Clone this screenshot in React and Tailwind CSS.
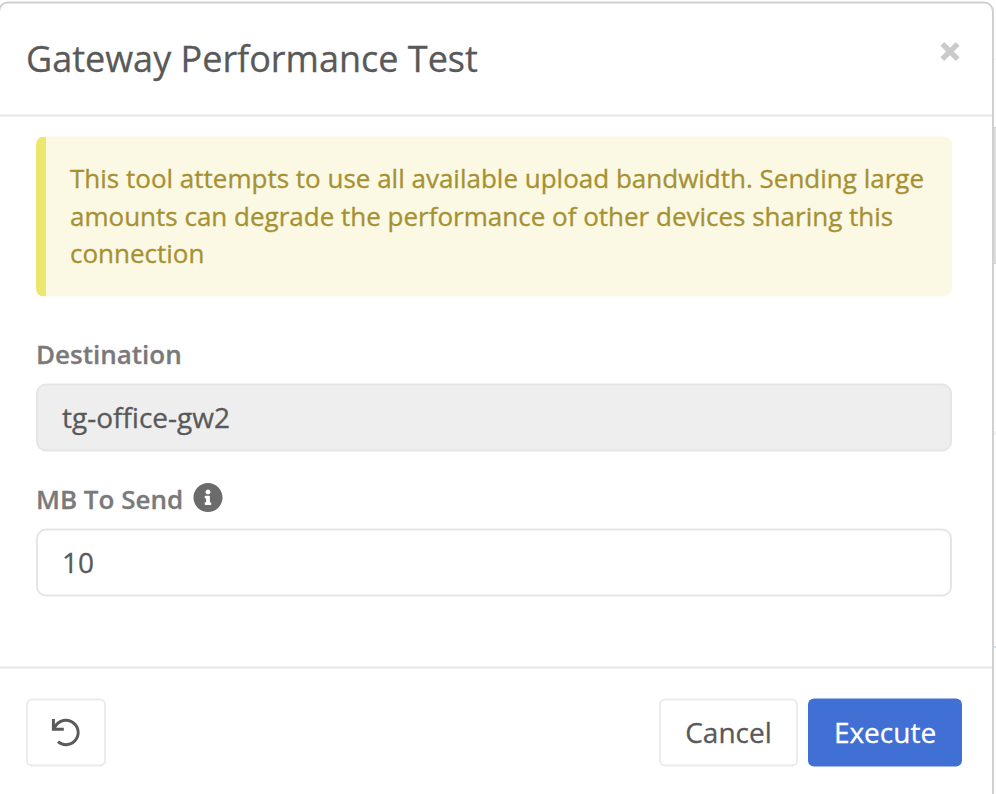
import { FaInfoCircle } from "react-icons/fa";

function CloseIcon() {
  return (
    <svg className="block size-5" viewBox="0 0 20 20" fill="none" stroke="#cacaca" strokeWidth="5.4">
      <path d="M2.3 2.3 17.7 17.7M17.7 2.3 2.3 17.7" />
    </svg>
  );
}

function ResetIcon() {
  return (
    <svg className="block h-[30px] w-[30px]" viewBox="0 0 30 30" fill="none" stroke="#5a5a5a" strokeWidth="3">
      <path d="M2.4 1.5v10.2H12.8" />
      <path d="M3.2 11.7A12.2 12.2 0 1 1 7 24.2" />
    </svg>
  );
}

export default function App() {
  return (
    <div className="flex h-[794px] w-[996px] overflow-hidden bg-white font-['Open_Sans','Noto_Sans',sans-serif] text-[#595959] [-webkit-text-stroke-width:0.3px]">
      <div className="-ml-[2px] mt-px flex h-[802px] w-[996px] shrink-0 translate-y-[0.5px] flex-col rounded-[10px] border-2 border-[#d0d0d0] bg-white">
        <header className="flex h-[113px] shrink-0 items-start justify-between border-b-2 border-[#e7e7e7] pr-8 pl-[26px]">
          <h1 className="pt-[30px] text-[36px] leading-[50px] whitespace-nowrap">Gateway Performance Test</h1>
          <button className="pt-[37.5px]" aria-label="Close">
            <CloseIcon />
          </button>
        </header>

        <main className="flex h-[550px] shrink-0 flex-col pt-5 pr-10 pl-9">
          <div className="h-[160px] shrink-0 rounded-[8px] border-l-[10px] border-[#ece76f] bg-[#fbf8e4] pt-[23px] pl-6 text-[26px] leading-[37.5px] font-medium whitespace-nowrap text-[#a59132]">
            <p>This tool attempts to use all available upload bandwidth. Sending large</p>
            <p>amounts can degrade the performance of other devices sharing this</p>
            <p>connection</p>
          </div>

          <label className="mt-10 flex h-[47px] shrink-0 items-center pb-[13px] text-[26px] leading-[38px] font-semibold text-[#7a7a7a]">
            Destination
          </label>
          <div className="flex h-[68px] shrink-0 items-center rounded-[10px] border-2 border-[#e5e5e5] bg-[#eeeeee] pb-[2px] pl-6 text-[28px] leading-[38px]">
            tg-office-gw2
          </div>

          <label className="mt-[30px] flex h-[47px] shrink-0 items-center gap-[10px] pb-[13px] text-[26px] leading-[38px] font-semibold text-[#7a7a7a]">
            MB To Send
            <FaInfoCircle className="mb-[2px] size-[30px] text-[#6b6b6b]" />
          </label>
          <div className="flex h-[68px] shrink-0 items-center rounded-[10px] border-2 border-[#e5e5e5] bg-white pb-[2px] pl-6 text-[28px] leading-[38px]">
            10
          </div>
        </main>

        <footer className="flex shrink-0 items-center border-t-2 border-[#e7e7e7] pt-[30px] pr-[30px] pl-[26px] text-[28px] leading-[38px]">
          <button className="flex h-[68px] w-20 items-center justify-center rounded-[6px] border-2 border-[#e9ebed]" aria-label="Reset">
            <ResetIcon />
          </button>
          <button className="ml-auto h-[68px] w-[139px] rounded-[6px] border-2 border-[#e9ebed] pb-[2px]">Cancel</button>
          <button className="ml-[10px] h-[68px] w-[154px] rounded-[6px] bg-[#4170d4] pb-[2px] text-white">Execute</button>
        </footer>
      </div>

      <div className="flex w-[2px] shrink-0 flex-col">
        <div className="mt-[58px] h-[2px] bg-[#f5f5f5]" />
        <div className="mt-[67px] h-[137px] border-y border-[#cfcfcf] bg-[#dddddd]" />
        <div className="mt-[167px] h-[4px] bg-[#f3f3f3]" />
        <div className="mt-[211px] h-[2px] bg-[#d3def3]" />
      </div>
    </div>
  );
}
